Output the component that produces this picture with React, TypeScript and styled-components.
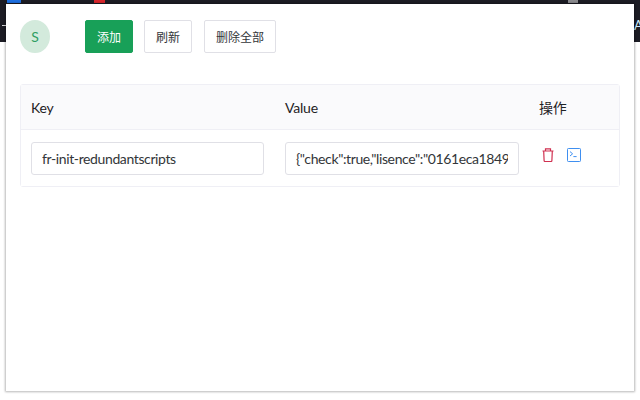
import React from "react";
import styled, { createGlobalStyle } from "styled-components";

const Global = createGlobalStyle`
  html, body { margin: 0; padding: 0; background: #fff; }
  body { font-family: "Lato", "Noto Sans CJK SC", sans-serif; width: 640px; height: 400px; overflow: hidden; }
`;

const Desktop = styled.div`
  position: relative;
  width: 640px;
  height: 400px;
  overflow: hidden;
  background: linear-gradient(to bottom, #1c1c24 0, #1c1c24 42px, #fff 42px);
  padding: 4px 6px 9px;
  box-sizing: border-box;
`;

const BackdropChip = styled.span<{ $x: number; $w: number; $c: string }>`
  position: absolute;
  top: 0;
  left: ${(p) => p.$x}px;
  width: ${(p) => p.$w}px;
  height: 3px;
  background: ${(p) => p.$c};
`;

const EdgeDash = styled.span`
  position: absolute;
  top: 25px;
  left: 2px;
  width: 4px;
  height: 1px;
  background: #d8d8d8;
`;

const EdgeLetter = styled.span`
  position: absolute;
  top: 18px;
  left: 634px;
  font-size: 13px;
  line-height: 14px;
  color: #cfeeff;
`;

const Popup = styled.main`
  position: relative;
  height: 100%;
  background: #fff;
  box-sizing: border-box;
  box-shadow: 0 0 2px 1px rgba(0, 0, 0, 0.28);
  padding: 16px 14px 0;
`;

const Toolbar = styled.div`
  display: flex;
  align-items: center;
  height: 33px;
  margin-bottom: 31px;
`;

const Avatar = styled.div`
  width: 30px;
  height: 33px;
  border-radius: 50%;
  background: #d3eadc;
  color: #2f9e63;
  font-size: 14px;
  display: flex;
  align-items: center;
  justify-content: center;
  margin-right: 35px;
`;

const Button = styled.button<{ $primary?: boolean; $wide?: boolean }>`
  height: 33px;
  box-sizing: border-box;
  padding: 0 11px;
  margin-right: 11px;
  margin-left: ${(p) => (p.$wide ? 1 : 0)}px;
  font: inherit;
  font-size: 12px;
  border-radius: 2px;
  border: 1px solid ${(p) => (p.$primary ? "#18a058" : "#e0e0e6")};
  background: ${(p) => (p.$primary ? "#18a058" : "#fff")};
  color: ${(p) => (p.$primary ? "#fff" : "#333639")};
`;

const Table = styled.div`
  border: 1px solid #efeff5;
  border-radius: 3px;
`;

const Row = styled.div<{ $head?: boolean }>`
  display: grid;
  grid-template-columns: 254px 254px 1fr;
  align-items: center;
  height: ${(p) => (p.$head ? 44 : 56)}px;
  background: ${(p) => (p.$head ? "#fafafc" : "#fff")};
  border-bottom: ${(p) => (p.$head ? "1px solid #efeff5" : "none")};
  font-size: 14px;
  letter-spacing: -0.2px;
  color: #1f2225;
`;

const Cell = styled.div`
  padding: 0 0 0 10px;
  min-width: 0;
`;

const Field = styled.input<{ $width: number }>`
  display: block;
  box-sizing: border-box;
  width: ${(p) => p.$width}px;
  height: 33px;
  border: 1px solid #e0e0e6;
  border-radius: 3px;
  padding: 0 10px;
  font: inherit;
  font-size: 14px;
  letter-spacing: -0.38px;
  color: #333639;
  background: #fff;
  outline: none;
`;

const Actions = styled.div`
  display: flex;
  align-items: center;
  gap: 13px;
  padding: 0 0 6px 3px;
`;

const Trash = () => (
  <svg width="12" height="14" viewBox="0 0 12 14" fill="none" stroke="#d03050" strokeWidth="1.2">
    <path d="M0.5 3h11M3.5 3V0.8h5V3M1.7 3l.4 9.6q0 .9 .9 .9h6q.9 0 .9-.9l.4-9.6" />
  </svg>
);

const Terminal = () => (
  <svg width="14" height="14" viewBox="0 0 14 14" fill="none" stroke="#3f8ff0" strokeWidth="1">
    <rect x="0.5" y="0.5" width="13" height="13" rx="0.8" />
    <path d="M3 3.6l2.6 2.2L3 8M6.4 8.6h3.2" />
  </svg>
);

export default function App() {
  return (
    <Desktop>
      <Global />
      <BackdropChip $x={7} $w={14} $c="#1d6fe0" />
      <BackdropChip $x={94} $w={11} $c="#d8262c" />
      <BackdropChip $x={568} $w={10} $c="#8a8a8e" />
      <EdgeDash />
      <EdgeLetter>A</EdgeLetter>
      <Popup>
        <Toolbar>
          <Avatar>S</Avatar>
          <Button $primary>添加</Button>
          <Button>刷新</Button>
          <Button $wide>删除全部</Button>
        </Toolbar>
        <Table>
          <Row $head>
            <Cell>Key</Cell>
            <Cell>Value</Cell>
            <Cell>操作</Cell>
          </Row>
          <Row>
            <Cell>
              <Field $width={233} readOnly value="fr-init-redundantscripts" />
            </Cell>
            <Cell>
              <Field $width={234} readOnly value={'{"check":true,"lisence":"0161eca18491"}'} />
            </Cell>
            <Cell>
              <Actions>
                <Trash />
                <Terminal />
              </Actions>
            </Cell>
          </Row>
        </Table>
      </Popup>
    </Desktop>
  );
}
